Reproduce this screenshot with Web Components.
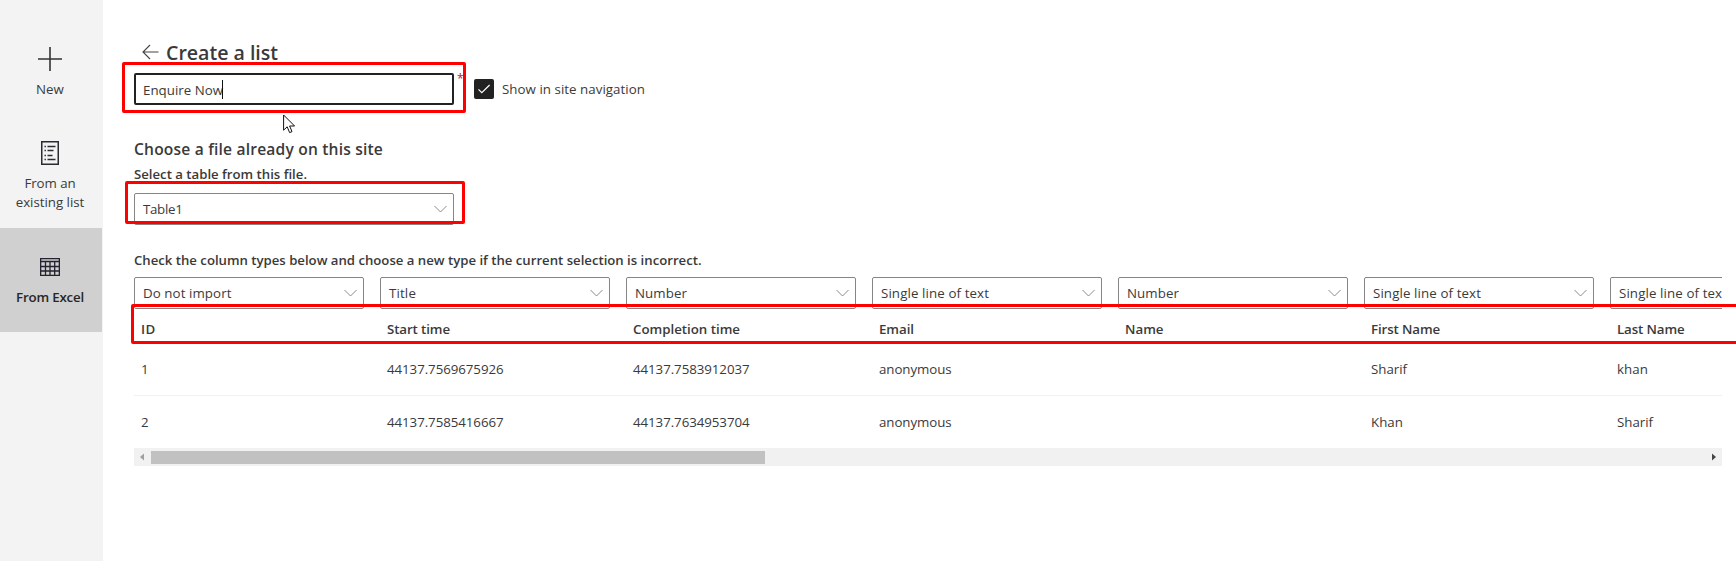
<!DOCTYPE html>
<html lang="en">
<head>
<meta charset="utf-8">
<title>Create a list</title>
<style>
html,body{margin:0;height:100%;overflow:hidden;background:#fff}
body{font:13.3px/20px "Open Sans","Noto Sans",sans-serif;color:#3a3a3a}
</style>
</head>
<body>
<list-app></list-app>
<script>
const define = (name, html, init) => {
  const t = document.createElement('template');
  t.innerHTML = html;
  customElements.define(name, class extends HTMLElement {
    constructor() {
      super();
      this.attachShadow({mode: 'open'}).append(t.content.cloneNode(true));
    }
    connectedCallback() { if (init) init(this, this.shadowRoot); }
  });
};

/* A single line of text tracked to a given width. */
define('ui-text', `<style>:host{display:inline-block;white-space:nowrap}span{display:inline-block}</style><span><slot></slot></span>`,
  (el, root) => {
    const w = +el.getAttribute('w');
    if (!w) return;
    const s = root.querySelector('span');
    s.style.letterSpacing = '0px';
    const n = el.textContent.length;
    s.style.letterSpacing = ((w - s.getBoundingClientRect().width) / n).toFixed(3) + 'px';
  });

define('nav-item', `<style>
:host{display:flex;flex-direction:column;align-items:center;width:102px;box-sizing:border-box;text-align:center;line-height:19px}
:host([selected]){background:#d0d0d0;font-weight:600;color:#262626}
.label{display:flex;flex-direction:column;align-items:center;margin-left:-2px}
</style><slot name="icon"></slot><div class="label"><slot></slot></div>`);

define('side-nav', `<style>
:host{display:flex;flex-direction:column;width:103px;background:#f3f3f3;flex:none}
svg{display:block;margin-left:-2px}
.new{padding-top:47px;height:94px}
.new svg{margin-bottom:9px;flex:none}
.list{padding-top:47px;height:134px}
.list svg{margin-bottom:9px;flex:none}
.excel{height:104px;padding-top:30px}
.excel svg{margin-bottom:12px;flex:none}
</style>
<nav-item class="new"><svg slot="icon" width="24" height="24" fill="none" stroke="#333" stroke-width="1.6"><path d="M12 0v24M0 12h24"/></svg><ui-text w="28">New</ui-text></nav-item>
<nav-item class="list"><svg slot="icon" width="18" height="24" fill="none" stroke="#2b2b33" stroke-width="1.5"><path d="M.75.75h16.5v22.5H.75z"/><path stroke-width="1.3" d="M3.5 5.5h1.4M6.5 5.5h8M3.5 9.5h1.4M6.5 9.5h6M3.5 14.5h1.4M6.5 14.5h5M3.5 18.5h1.4M6.5 18.5h8"/></svg><ui-text w="51">From an</ui-text><ui-text w="68.5">existing list</ui-text></nav-item>
<nav-item class="excel" selected><svg slot="icon" width="20" height="18" fill="none" stroke="#222230" stroke-width="1.3"><path d="M.65.65h18.7v16.7H.65zM.65 3.5h18.7M.65 8.5h18.7M.65 13h18.7M5.5 3.5v14M10 3.5v14M14.7 3.5v14"/></svg><ui-text w="68">From Excel</ui-text></nav-item>`);

define('drop-down', `<style>
:host{display:flex;align-items:center;justify-content:space-between;box-sizing:border-box;width:230px;height:32px;border:1px solid #858585;border-radius:2px;padding:0 6px 0 8px;background:#fff;flex:none}
svg{display:block}
</style><slot></slot><svg width="13" height="8" fill="none" stroke="#8a8a8a"><path d="M.5 1l6 6 6-6"/></svg>`);

define('text-field', `<style>
:host{display:flex;box-sizing:border-box;width:320px;height:32px;border:2px solid #222;border-radius:2px;padding:5px 0 0 7px;background:#fff}
i{width:1px;height:19px;background:#111;margin-left:-1px}
</style><slot></slot><i></i>`);

define('check-box', `<style>
:host{display:flex;align-items:center;gap:8px}
b{width:20px;height:20px;background:#222;border-radius:2px;display:block}
svg{display:block}
</style><b><svg width="20" height="20" fill="none" stroke="#fff" stroke-width="1.2"><path d="M4.5 10.3l3.3 3.3 7.8-7.6"/></svg></b><slot></slot>`);

/* Red annotation frame, placed over the page. */
define('red-frame', `<style>:host{position:absolute;box-sizing:border-box;border:3px solid #fe0000;border-radius:2px;pointer-events:none}</style>`);

define('scroll-bar', `<style>
:host{display:flex;align-items:center;height:18px;background:#f1f1f1}
svg{display:block;width:17px;height:18px;flex:none}
div{width:614px;height:13px;background:#c1c1c1}
span{flex:1}
</style><svg fill="#a0a0a0"><path d="M10 5.5v7L6 9z"/></svg><div></div><span></span><svg fill="#454545"><path d="M7 5.5v7L11 9z"/></svg>`);

define('data-grid', `<style>
:host{display:block;width:1588px;overflow:hidden}
.row{display:grid;grid-template-columns:repeat(7,230px);gap:0 16px;width:1706px}
.head{height:24px;padding-top:10px;font-weight:600}
.data{height:52px;align-items:center}
.data.first{border-bottom:1px solid #f1f1f1}
.cell{padding-left:7px}
</style><div class="row types"></div><div class="row head"></div><div class="row data first"></div><div class="row data"></div><scroll-bar></scroll-bar>`,
  (el, root) => {
    const text = ([s, w]) => s ? `<ui-text w="${w}">${s}</ui-text>` : '';
    const fill = (sel, items, wrap) => { root.querySelector(sel).innerHTML = items.map(i => wrap(text(i))).join(''); };
    const cell = t => `<div class="cell">${t}</div>`;
    const line = ['Single line of text', 108];
    fill('.types', [['Do not import', 88.5], ['Title', 27], ['Number', 52], line, ['Number', 52], line, line], t => `<drop-down>${t}</drop-down>`);
    fill('.head', [['ID', 14.5], ['Start time', 63], ['Completion time', 107], ['Email', 35], ['Name', 38.5], ['First Name', 69], ['Last Name', 67.5]], cell);
    fill('.data.first', [['1', 7.5], ['44137.7569675926', 116.5], ['44137.7583912037', 116.5], ['anonymous', 72.5], [''], ['Sharif', 36], ['khan', 31]], cell);
    fill('.data:not(.first)', [['2', 7.5], ['44137.7585416667', 116.5], ['44137.7634953704', 116.5], ['anonymous', 72.5], [''], ['Khan', 32], ['Sharif', 36]], cell);
  });

define('list-app', `<style>
:host{display:flex;position:relative;width:1736px;height:561px;overflow:hidden;background:#fff}
main{flex:1;min-width:0;padding:38px 0 0 31px}
svg{display:block}
h1,h2,h3{margin:0;font-weight:600}
h1{display:flex;align-items:center;font-size:19.6px;line-height:28px;gap:7px;padding-left:8px}
h1 ui-text{margin:1px 0 -1px}
h2{font-size:15.6px;line-height:22px;margin-top:33px}
h3{font-size:13.2px;line-height:20px;margin-top:4px}
.name{display:flex;align-items:flex-start;margin-top:7px}
.star{color:#a4262c;font-size:12px;line-height:14px;width:17px;margin:-1px 0 0 3px}
check-box{margin-top:6px}
.table{width:320px;margin-top:9px}
.check{margin:25px 0 7px}
.f1{left:122px;top:62px;width:344px;height:51px}
.f2{left:125px;top:181px;width:340px;height:43px}
.f3{left:131px;top:304px;width:1612px;height:40px}
.pointer{position:absolute;left:283px;top:114px}
</style>
<side-nav></side-nav>
<main>
<h1><svg width="17" height="16" fill="none" stroke="#444" stroke-width="1.1"><path d="M16.5 8H1M8 1L1 8l7 7"/></svg><ui-text w="112">Create a list</ui-text></h1>
<div class="name"><text-field><ui-text w="80">Enquire Now</ui-text></text-field><span class="star">*</span><check-box><ui-text w="143">Show in site navigation</ui-text></check-box></div>
<h2><ui-text w="249">Choose a file already on this site</ui-text></h2>
<h3><ui-text w="173">Select a table from this file.</ui-text></h3>
<drop-down class="table"><ui-text w="39.5">Table1</ui-text></drop-down>
<h3 class="check"><ui-text w="567.5">Check the column types below and choose a new type if the current selection is incorrect.</ui-text></h3>
<data-grid></data-grid>
</main>
<red-frame class="f1"></red-frame>
<red-frame class="f2"></red-frame>
<red-frame class="f3"></red-frame>
<svg class="pointer" width="13" height="20" fill="#fff" stroke="#111"><path d="M.6 1v15.2l3.6-3.4 2.4 5.8 2.4-1-2.4-5.6h5z"/></svg>`);
</script>
</body>
</html>
